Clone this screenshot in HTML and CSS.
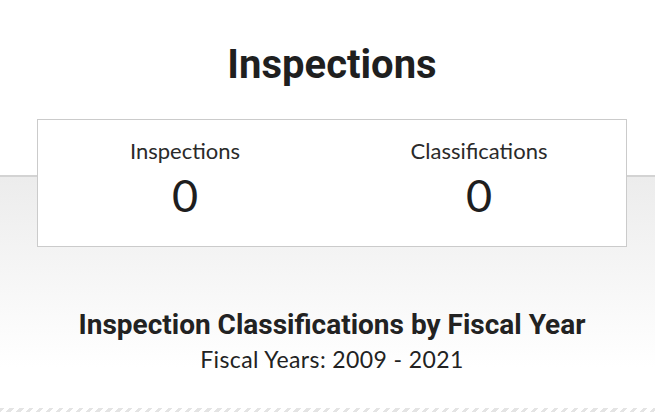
FILE: index.html
```html
<!DOCTYPE html>
<html lang="en">
<head>
<meta charset="utf-8">
<title>Inspections</title>
<link rel="stylesheet" href="styles.css">
</head>
<body>
<header class="hero">
  <h1 class="title">Inspections</h1>
</header>
<main class="band">
  <section class="card">
    <div class="stat">
      <div class="stat-label">Inspections</div>
      <div class="stat-value">0</div>
    </div>
    <div class="stat">
      <div class="stat-label">Classifications</div>
      <div class="stat-value">0</div>
    </div>
  </section>
  <h2 class="chart-title">Inspection Classifications by Fiscal Year</h2>
  <p class="chart-sub">Fiscal Years: 2009 - 2021</p>
  <div class="stripes"></div>
</main>
</body>
</html>
```
FILE: styles.css
```css
html, body {
  margin: 0;
  padding: 0;
  background: #fff;
  color: #222;
  font-family: "Lato", "Open Sans", sans-serif;
}
.hero {
  padding: 41px 0 86px 9px;
  text-align: center;
}
.title {
  margin: 0;
  font-family: "Roboto", sans-serif;
  font-weight: 700;
  font-size: 40px;
  line-height: 48px;
  color: #1f1f1f;
}
.band {
  border-top: 2px solid #d3d3d3;
  background: linear-gradient(#ececec 0, #ffffff 190px);
  padding: 0 0 10px 9px;
}
.card {
  position: relative;
  margin: -58px 28px 0 28px;
  height: 126px;
  border: 1px solid #cbcbcb;
  background: #fff;
  display: grid;
  grid-template-columns: 1fr 1fr;
  text-align: center;
}
.stat {
  padding-top: 18px;
}
.stat-label {
  font-size: 22px;
  line-height: 26px;
  color: #2a2a2a;
}
.stat-value {
  margin-top: 6px;
  font-size: 45px;
  line-height: 50px;
  color: #1e1e1e;
}
.chart-title {
  margin: 62px 0 0;
  text-align: center;
  font-family: "Roboto", sans-serif;
  font-weight: 700;
  font-size: 28px;
  line-height: 32px;
  color: #222;
}
.chart-sub {
  margin: 4px 0 0;
  text-align: center;
  font-size: 23px;
  letter-spacing: 0.4px;
  line-height: 28px;
  color: #222;
}
.stripes {
  margin: 35px 0 0 -9px;
  height: 4px;
  background: repeating-linear-gradient(135deg, #e4e4e4 0 3px, transparent 3px 7px);
}
```
